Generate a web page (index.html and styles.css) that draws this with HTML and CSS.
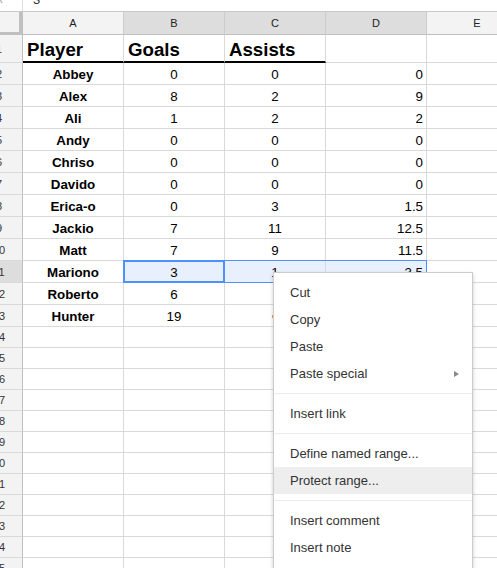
FILE: index.html
```html
<!DOCTYPE html>
<html>
<head>
<meta charset="utf-8">
<link rel="stylesheet" href="styles.css">
</head>
<body>
<div class="app">
  <div class="fbar">
    <div class="fx"><span class="fx-text">fx</span></div>
    <div class="fval">3</div>
  </div>
  <div class="sheet">
    <div class="grid">
      <div class="corner"></div>
      <div class="ch">A</div><div class="ch hl">B</div><div class="ch hl">C</div><div class="ch hl">D</div><div class="ch">E</div>

      <div class="rh red">1</div>
      <div class="c h thick">Player</div><div class="c h thick">Goals</div><div class="c h thick">Assists</div><div class="c"></div><div class="c"></div>

      <div class="rh">2</div>
      <div class="c n">Abbey</div><div class="c m">0</div><div class="c m">0</div><div class="c r">0</div><div class="c"></div>
      <div class="rh">3</div>
      <div class="c n">Alex</div><div class="c m">8</div><div class="c m">2</div><div class="c r">9</div><div class="c"></div>
      <div class="rh">4</div>
      <div class="c n">Ali</div><div class="c m">1</div><div class="c m">2</div><div class="c r">2</div><div class="c"></div>
      <div class="rh">5</div>
      <div class="c n">Andy</div><div class="c m">0</div><div class="c m">0</div><div class="c r">0</div><div class="c"></div>
      <div class="rh">6</div>
      <div class="c n">Chriso</div><div class="c m">0</div><div class="c m">0</div><div class="c r">0</div><div class="c"></div>
      <div class="rh">7</div>
      <div class="c n">Davido</div><div class="c m">0</div><div class="c m">0</div><div class="c r">0</div><div class="c"></div>
      <div class="rh">8</div>
      <div class="c n">Erica-o</div><div class="c m">0</div><div class="c m">3</div><div class="c r">1.5</div><div class="c"></div>
      <div class="rh">9</div>
      <div class="c n">Jackio</div><div class="c m">7</div><div class="c m">11</div><div class="c r">12.5</div><div class="c"></div>
      <div class="rh">10</div>
      <div class="c n">Matt</div><div class="c m">7</div><div class="c m">9</div><div class="c r">11.5</div><div class="c"></div>
      <div class="rh hl">11</div>
      <div class="c n">Mariono</div><div class="c m sel">3</div><div class="c m sel">1</div><div class="c r sel">3.5</div><div class="c"></div>
      <div class="rh">12</div>
      <div class="c n">Roberto</div><div class="c m">6</div><div class="c m"></div><div class="c r"></div><div class="c"></div>
      <div class="rh">13</div>
      <div class="c n">Hunter</div><div class="c m">19</div><div class="c m"></div><div class="c r"></div><div class="c"></div>

      <div class="rh">14</div><div class="c"></div><div class="c"></div><div class="c"></div><div class="c"></div><div class="c"></div>
      <div class="rh">15</div><div class="c"></div><div class="c"></div><div class="c"></div><div class="c"></div><div class="c"></div>
      <div class="rh">16</div><div class="c"></div><div class="c"></div><div class="c"></div><div class="c"></div><div class="c"></div>
      <div class="rh">17</div><div class="c"></div><div class="c"></div><div class="c"></div><div class="c"></div><div class="c"></div>
      <div class="rh">18</div><div class="c"></div><div class="c"></div><div class="c"></div><div class="c"></div><div class="c"></div>
      <div class="rh">19</div><div class="c"></div><div class="c"></div><div class="c"></div><div class="c"></div><div class="c"></div>
      <div class="rh">20</div><div class="c"></div><div class="c"></div><div class="c"></div><div class="c"></div><div class="c"></div>
      <div class="rh">21</div><div class="c"></div><div class="c"></div><div class="c"></div><div class="c"></div><div class="c"></div>
      <div class="rh">22</div><div class="c"></div><div class="c"></div><div class="c"></div><div class="c"></div><div class="c"></div>
      <div class="rh">23</div><div class="c"></div><div class="c"></div><div class="c"></div><div class="c"></div><div class="c"></div>
      <div class="rh">24</div><div class="c"></div><div class="c"></div><div class="c"></div><div class="c"></div><div class="c"></div>
      <div class="rh">25</div><div class="c"></div><div class="c"></div><div class="c"></div><div class="c"></div><div class="c"></div>
    </div>
    <div class="range"></div>
    <div class="active"></div>
    <div class="mark"></div>
  </div>

  <div class="menu">
    <div class="item">Cut</div>
    <div class="item">Copy</div>
    <div class="item">Paste</div>
    <div class="item sub">Paste special<span class="arrow"></span></div>
    <div class="sep"></div>
    <div class="item">Insert link</div>
    <div class="sep"></div>
    <div class="item">Define named range...</div>
    <div class="item hover">Protect range...</div>
    <div class="sep"></div>
    <div class="item">Insert comment</div>
    <div class="item">Insert note</div>
  </div>
</div>
</body>
</html>
```

FILE: styles.css
```css
html, body {
  margin: 0;
  padding: 0;
  background: #fff;
}

body {
  width: 497px;
  height: 568px;
  overflow: hidden;
  font-family: "Liberation Sans", Arial, sans-serif;
}

.app {
  position: relative;
  width: 497px;
  height: 568px;
  overflow: hidden;
}

/* formula bar (mostly scrolled away) */
.fbar {
  display: flex;
  height: 11px;
  border-bottom: 1px solid #c8c8c8;
  overflow: hidden;
}

.fx {
  width: 22px;
  height: 11px;
  border-right: 1px solid #dcdcdc;
  overflow: hidden;
}

.fx-text {
  display: block;
  margin-top: -9px;
  margin-left: -7px;
  font-family: "Liberation Serif", serif;
  font-style: italic;
  font-size: 14px;
  line-height: 16px;
  color: #b0b0b0;
}

.fval {
  margin-left: 10px;
  margin-top: -8px;
  font-size: 13px;
  line-height: 15px;
  color: #333;
}

/* sheet */
.sheet {
  position: relative;
  margin-left: -24px;
}

.grid {
  display: grid;
  grid-template-columns: 47px 101px 101px 101px 101px 101px;
  grid-template-rows: 23px 28px repeat(12, 22px) repeat(12, 21px);
  width: 552px;
}

.grid > div {
  box-sizing: border-box;
}

.corner {
  background: #f3f3f3;
  border-right: 4px solid #c0c0c0;
  border-bottom: 3px solid #c0c0c0;
}

.ch {
  background: #f3f3f3;
  border-right: 1px solid #cccccc;
  border-bottom: 1px solid #c0c0c0;
  display: flex;
  align-items: center;
  justify-content: center;
  font-size: 11px;
  color: #222;
}

.ch.hl {
  background: #dddddd;
}

.rh {
  background: #f3f3f3;
  border-right: 1px solid #c0c0c0;
  border-bottom: 1px solid #d9d9d9;
  display: flex;
  align-items: center;
  justify-content: center;
  font-size: 11px;
  color: #333;
}

.rh.hl {
  background: #dddddd;
}

.rh.red {
  color: #a00000;
}

.c {
  border-right: 1px solid #d9d9d9;
  border-bottom: 1px solid #d9d9d9;
  display: flex;
  align-items: flex-end;
  padding: 0 3px 2px;
  font-size: 13.33px;
  color: #000;
  white-space: nowrap;
  overflow: hidden;
}

.c.thick {
  border-bottom: 2px solid #000;
}

.c.h {
  font-size: 18.67px;
  font-weight: bold;
  padding: 0 3px 0 4px;
  justify-content: flex-start;
}

.c.n {
  font-weight: bold;
  justify-content: center;
}

.c.m {
  justify-content: center;
}

.c.r {
  justify-content: flex-end;
}

.c.sel {
  background: #e8f0fe;
}

/* selection overlays */
.range {
  position: absolute;
  left: 147px;
  top: 248px;
  width: 304px;
  height: 23px;
  box-sizing: border-box;
  border: 1px solid #4d90fe;
  pointer-events: none;
}

.active {
  position: absolute;
  left: 147px;
  top: 248px;
  width: 102px;
  height: 23px;
  box-sizing: border-box;
  border: 2px solid #4d90fe;
  pointer-events: none;
}

.mark {
  position: absolute;
  left: 296px;
  top: 303px;
  width: 2px;
  height: 3px;
  background: #f0a050;
}

/* context menu */
.menu {
  position: absolute;
  left: 273px;
  top: 272px;
  width: 200px;
  height: 320px;
  box-sizing: border-box;
  padding-top: 6px;
  background: #fff;
  border: 1px solid rgba(0, 0, 0, 0.2);
  box-shadow: 0 2px 4px rgba(0, 0, 0, 0.2);
}

.item {
  position: relative;
  height: 27px;
  line-height: 27px;
  padding-left: 16px;
  font-size: 13px;
  color: #333;
  white-space: nowrap;
}

.item.hover {
  background: #eeeeee;
}

.arrow {
  position: absolute;
  right: 13px;
  top: 11px;
  width: 0;
  height: 0;
  border-top: 3px solid transparent;
  border-bottom: 3px solid transparent;
  border-left: 5px solid #888;
}

.sep {
  height: 1px;
  margin: 6px 0;
  background: #ebebeb;
}
```
